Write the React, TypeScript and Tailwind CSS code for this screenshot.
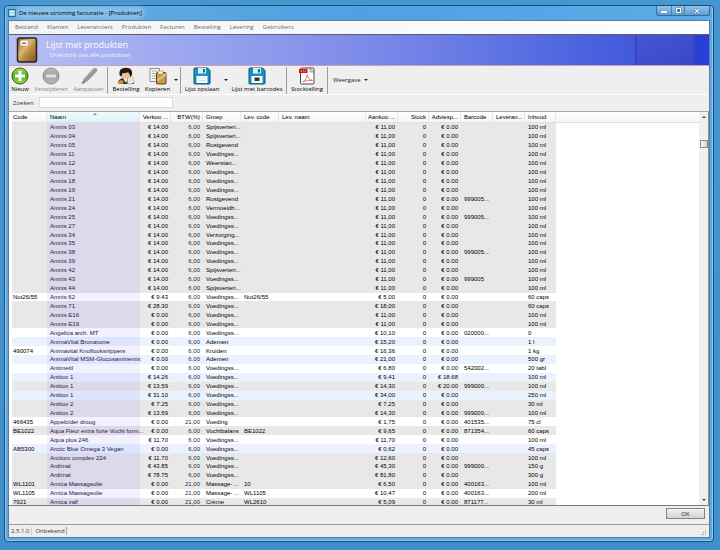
import type { ReactNode } from 'react'

type Tone = 'g' | 'w' | 'b'
type Product = [Tone, string, string, string, string, string, string, string, string, string, string]

const amnis = (n: string, groep: string, barcode = ''): Product => [
  'g', '', 'Amnis ' + n, '€ 14.00', '6,00', groep, '', '€ 11,00', '€ 0.00', barcode, '100 ml',
]

const PRODUCTS: Product[] = [
  amnis('03', 'Spijsverteri...'),
  amnis('04', 'Spijsverteri...'),
  amnis('05', 'Rustgevend'),
  amnis('11', 'Voedingss...'),
  amnis('12', 'Weerstan...'),
  amnis('13', 'Voedingss...'),
  amnis('18', 'Voedingss...'),
  amnis('19', 'Voedingss...'),
  amnis('21', 'Rustgevend', '999005...'),
  amnis('24', 'Vermoeidh...'),
  amnis('25', 'Voedingss...', '999005...'),
  amnis('27', 'Voedingss...'),
  amnis('34', 'Verzorging...'),
  amnis('35', 'Voedingss...'),
  amnis('38', 'Voedingss...', '999005...'),
  amnis('39', 'Voedingss...'),
  amnis('42', 'Spijsverteri...'),
  amnis('43', 'Voedingss...', '999005'),
  amnis('44', 'Spijsverteri...'),
  ['w', 'Nut26/55', 'Amnis 62', '€ 9.43', '6,00', 'Voedingss...', 'Nut26/55', '€ 5,00', '€ 0.00', '', '60 caps'],
  ['g', '', 'Amnis 71', '€ 28.30', '6,00', 'Voedingss...', '', '€ 18,00', '€ 0.00', '', '60 caps'],
  ['g', '', 'Amnis E16', '€ 0.00', '6,00', 'Voedingss...', '', '€ 11,00', '€ 0.00', '', '100 ml'],
  ['g', '', 'Amnis E19', '€ 0.00', '6,00', 'Voedingss...', '', '€ 11,00', '€ 0.00', '', '100 ml'],
  ['w', '', 'Angelica arch. MT', '€ 0.00', '6,00', 'Voedingss...', '', '€ 10,10', '€ 0.00', '020000...', '0'],
  ['b', '', 'AnimaVital Bronarome', '€ 0.00', '6,00', 'Ademen', '', '€ 15,20', '€ 0.00', '', '1 l'],
  ['w', '490074', 'Animavital Knoflooksnippers', '€ 0.00', '6,00', 'Kruiden', '', '€ 16,36', '€ 0.00', '', '1 kg'],
  ['b', '', 'AnimaVital MSM-Glucosaminemix', '€ 0.00', '6,00', 'Ademen', '', '€ 21,00', '€ 0.00', '', '500 gr'],
  ['w', '', 'Antimetil', '€ 0.00', '6,00', 'Voedingss...', '', '€ 6,80', '€ 0.00', '542002...', '20 tabl'],
  ['b', '', 'Antitox 1', '€ 14.26', '6,00', 'Voedingss...', '', '€ 9,41', '€ 18.68', '', '100 ml'],
  ['g', '', 'Antitox 1', '€ 13.59', '6,00', 'Voedingss...', '', '€ 14,30', '€ 20.00', '999000...', '100 ml'],
  ['b', '', 'Antitox 1', '€ 31.10', '6,00', 'Voedingss...', '', '€ 34,00', '€ 0.00', '', '250 ml'],
  ['g', '', 'Antitox 2', '€ 7.25', '6,00', 'Voedingss...', '', '€ 7,25', '€ 0.00', '', '30 ml'],
  ['g', '', 'Antitox 2', '€ 13.59', '6,00', 'Voedingss...', '', '€ 14,30', '€ 0.00', '999000...', '100 ml'],
  ['w', '466435', 'Appelcider droog', '€ 0.00', '21,00', 'Voeding', '', '€ 1,75', '€ 0.00', '401535...', '75 cl'],
  ['g', 'BE1022', 'Aqua Fleur extra forte Vocht form...', '€ 0.00', '6,00', 'Vochtbalans', 'BE1022', '€ 9,65', '€ 0.00', '871354...', '60 caps'],
  ['w', '', 'Aqua plus 246', '€ 11.70', '6,00', 'Voedingss...', '', '€ 11,70', '€ 0.00', '', '100 ml'],
  ['b', 'AB5300', 'Arctic Blue Omega 3 Vegan', '€ 0.00', '6,00', 'Voedingss...', '', '€ 0,62', '€ 0.00', '', '45 caps'],
  ['g', '', 'Arctium complex 224', '€ 11.70', '6,00', 'Voedingss...', '', '€ 12,60', '€ 0.00', '', '100 ml'],
  ['g', '', 'Ardrinal', '€ 43.85', '6,00', 'Voedingss...', '', '€ 45,30', '€ 0.00', '999000...', '150 g'],
  ['g', '', 'Ardrinal', '€ 78.75', '6,00', 'Voedingss...', '', '€ 81,80', '€ 0.00', '', '300 g'],
  ['g', 'WL1101', 'Arnica Massageolie', '€ 0.00', '21,00', 'Massage- ...', '10', '€ 6,50', '€ 0.00', '400163...', '100 ml'],
  ['w', 'WL1105', 'Arnica Massageolie', '€ 0.00', '21,00', 'Massage- ...', 'WL1105', '€ 10,47', '€ 0.00', '400163...', '200 ml'],
  ['g', '7921', 'Arnica zalf', '€ 0.00', '21,00', 'Crème', 'WL2610', '€ 5,09', '€ 0.00', '871177...', '30 ml'],
]

const ROW_TONE: Record<Tone, string> = { g: 'bg-[#e8e8e8]', w: 'bg-white', b: 'bg-[#ebf2fe]' }
const NAME_TONE: Record<Tone, string> = { g: 'bg-[#dcdaea]', w: 'bg-[#f3f1fe]', b: 'bg-[#dfe4fd]' }

const COLUMNS = [
  { label: 'Code', width: 'w-[35px]', right: false },
  { label: 'Naam', width: 'w-[93px]', right: false },
  { label: 'Verkoo ...', width: 'w-[31px]', right: true },
  { label: 'BTW(%)', width: 'w-[32px]', right: true },
  { label: 'Groep', width: 'w-[38px]', right: false },
  { label: 'Lev. code', width: 'w-[38px]', right: false },
  { label: 'Lev. naam', width: 'w-[87px]', right: false },
  { label: 'Aankoo ...', width: 'w-[32px]', right: true },
  { label: 'Stock', width: 'w-[31px]', right: true },
  { label: 'Adviesp...', width: 'w-[32px]', right: true },
  { label: 'Barcode', width: 'w-[32px]', right: false },
  { label: 'Leveran...', width: 'w-[32px]', right: false },
  { label: 'Inhoud', width: 'w-[31px]', right: false },
]

const MENU = ['Bestand', 'Klanten', 'Leveranciers', 'Produkten', 'Facturen', 'Bestelling', 'Levering', 'Gebruikers']

function Row({ p }: { p: Product }) {
  const [tone, code, naam, verkoop, btw, groep, levCode, aankoop, advies, barcode, inhoud] = p
  const right = 'pr-[3px] text-right'
  const left = 'pl-[3px]'
  return (
    <tr className={ROW_TONE[tone]}>
      <td className="pl-px">{code}</td>
      <td className={`${left} ${NAME_TONE[tone]} text-[#1c1747]`}>{naam}</td>
      <td className={right}>{verkoop}</td>
      <td className={`${right} text-[#17294d]`}>{btw}</td>
      <td className={left}>{groep}</td>
      <td className={left}>{levCode}</td>
      <td />
      <td className={right}>{aankoop}</td>
      <td className={right}>0</td>
      <td className={right}>{advies}</td>
      <td className={left}>{barcode}</td>
      <td />
      <td className={left}>{inhoud}</td>
      <td className="bg-white" />
    </tr>
  )
}

function Tool({ label, width, disabled, children }: { label: string; width: string; disabled?: boolean; children: ReactNode }) {
  return (
    <button
      type="button"
      disabled={disabled}
      className={`${width} flex shrink-0 flex-col items-center whitespace-nowrap text-black disabled:text-[#8a8a8a]`}
    >
      {children}
      <span className="leading-[8px]">{label}</span>
    </button>
  )
}

const Separator = () => <span className="mx-px h-[27px] w-px shrink-0 bg-[#9b9b9b]" />

function DropButton({ label }: { label: string }) {
  return (
    <button type="button" aria-label={label} className="flex h-[26px] w-[7px] shrink-0 items-center justify-center">
      <svg className="h-[2px] w-[4px]" viewBox="0 0 4 2" aria-hidden="true">
        <path d="M0 0h4L2 2z" fill="#222" />
      </svg>
    </button>
  )
}

function RoundIcon({ plus }: { plus?: boolean }) {
  const id = plus ? 'plusFill' : 'minusFill'
  return (
    <svg className="size-[18px]" viewBox="0 0 18 18" aria-hidden="true">
      <defs>
        <linearGradient id={id} x1="0" y1="0" x2="0" y2="1">
          <stop offset="0" stopColor={plus ? '#b5e06a' : '#bdbdbd'} />
          <stop offset=".5" stopColor={plus ? '#4fae1d' : '#a2a2a2'} />
          <stop offset="1" stopColor={plus ? '#a4dc42' : '#b9b9b9'} />
        </linearGradient>
      </defs>
      <circle cx="9" cy="9" r="8" fill={`url(#${id})`} stroke={plus ? '#2c6a18' : '#8f8f8f'} />
      <path d={plus ? 'M7.500 4h3v3.500H14v3h-3.500V14h-3v-3.500H4v-3h3.500z' : 'M4 7.500h10v3H4z'} fill={plus ? '#fff' : '#dedede'} />
    </svg>
  )
}

function PenIcon() {
  return (
    <svg className="size-[18px]" viewBox="0 0 18 18" aria-hidden="true">
      <path d="M1.500 17 4 11.500 13 1.800Q15 .5 16.500 1.500T16.800 4.500L8 13.800 3.500 16.300z" fill="#979797" />
      <path d="M5 11.500 14 2.500" stroke="#b5b5b5" fill="none" />
      <path d="m1.500 17 2-3 1.500 1.500z" fill="#666" />
    </svg>
  )
}

function PersonIcon() {
  return (
    <svg className="size-[18px]" viewBox="0 0 18 18" aria-hidden="true">
      <path d="M1 17q0-5 5-6h5q5 1 6 6z" fill="#2b2b2b" />
      <path d="M6 11h5l-2 5z" fill="#f6f6f6" />
      <circle cx="9" cy="7.500" r="4.300" fill="#f1bd8e" />
      <path d="M2.500 8Q1.500 .8 9 .8q7 0 6 7.200l-1.700 2Q13 6.500 11 5.200 7 6.500 5.500 6L4.300 10z" fill="#1d1a19" />
      <path d="M1 15q3-3 5-1.500l1 2L5 17H1z" fill="#cf8f2b" />
      <path d="m10.500 11 5-1.500 2 5.500-4 2.500-3-1z" fill="#ede6d8" stroke="#a59a86" strokeWidth=".5" />
    </svg>
  )
}

function CopyIcon() {
  return (
    <svg className="size-[18px]" viewBox="0 0 18 18" aria-hidden="true">
      <path d="M1 1.500h9.500v13H1z" fill="#f7f7f7" stroke="#8d8d8d" />
      <path d="M3 4h5M3 6.500h4M3 9h4M3 11.500h4" stroke="#aaa" />
      <rect x="7.500" y="5.500" width="9.500" height="11.500" rx="1" fill="#c49a51" stroke="#604418" />
      <path d="M8 12 17 6v3l-9 6z" fill="#e3c486" opacity=".8" />
      <path d="M9 4h5v3H9z" fill="#fff" stroke="#8b7a55" strokeWidth=".6" />
    </svg>
  )
}

function DiskIcon({ barcode }: { barcode?: boolean }) {
  return (
    <svg className="size-[18px]" viewBox="0 0 18 18" aria-hidden="true">
      <path d="M1 2q0-1 1-1h12.500L17 3.500V16q0 1-1 1H2q-1 0-1-1z" fill="#1593c4" stroke="#0b536f" />
      <path d="M5 1h8v5.500H5z" fill="#dfeef4" />
      <path d="M10 2h2v3.500h-2z" fill="#176a8b" />
      <path d="M3.500 9h11v7h-11z" fill="#fff" />
      {barcode ? (
        <path d="M6.500 10.500h5V14h-5z" fill="#333" />
      ) : (
        <path d="M5 11h8M5 13.500h8" stroke="#cfe2ea" />
      )}
    </svg>
  )
}

function PdfIcon() {
  return (
    <svg className="size-[18px]" viewBox="0 0 18 18" aria-hidden="true">
      <rect x="2.500" y="1" width="13.500" height="16" rx="1" fill="#fff" stroke="#4a4a4a" />
      <path d="M12 1l4 4h-4z" fill="#ddd" stroke="#777" strokeWidth=".6" />
      <path d="M1 2h8.500v4H1z" fill="#c8181c" />
      <path d="M2.500 4h5.500" stroke="#f6b5b5" strokeDasharray="1.500 .7" />
      <path d="M5 15q4-3 4.300-7.500M9.300 8q.5 4 5.200 5.500M5 15q4-2.500 9.500-1.500" stroke="#dc6a6a" fill="none" strokeWidth=".9" />
    </svg>
  )
}

function BookIcon() {
  return (
    <svg className="h-[26px] w-[22px]" viewBox="0 0 22 26" aria-hidden="true">
      <defs>
        <linearGradient id="book" x1="0" y1="0" x2="1" y2="1">
          <stop offset="0" stopColor="#8a6429" />
          <stop offset=".4" stopColor="#d8b878" />
          <stop offset=".6" stopColor="#b78a40" />
          <stop offset="1" stopColor="#7d571d" />
        </linearGradient>
      </defs>
      <rect x="1.500" y="1" width="19" height="24" rx="2" fill="url(#book)" stroke="#2b2118" strokeWidth="1.500" />
      <path d="M4.500 3.500h7v5h-7z" fill="#fff" />
      <path d="M6 5.500h4v1.500H6z" fill="#777" />
    </svg>
  )
}

export default function App() {
  return (
    <div className="flex h-screen flex-col bg-linear-to-b from-[#4696d2] to-[#3f8fca] pt-[5px] pr-[6px] pb-[8px] pl-[4px] font-['Open_Sans',sans-serif] text-[6px] leading-[8px] text-black">
      <div className="flex min-h-0 flex-1 flex-col rounded-[4px] border border-[#1f4f79] bg-[#5aaae8] px-[3px] pb-[3px] shadow-[inset_0_0_0_1px_#8fc8f2]">
        <header className="flex h-[14px] shrink-0 items-start justify-between bg-linear-to-r from-[#63ace3] via-[#4fa1e2] to-[#5cabe8]">
          <div className="flex h-full items-center gap-[3px]">
            <svg className="size-[8px]" viewBox="0 0 8 8" aria-hidden="true">
              <rect x=".5" y=".5" width="7" height="7" fill="#8fd0dd" stroke="#2c6d86" />
              <path d="M2 2.500h4M2 4h3M2 5.500h4" stroke="#fff" strokeWidth=".7" />
            </svg>
            <h1 className="rounded-full bg-white/25 text-[6px] font-medium whitespace-nowrap shadow-[0_0_4px_3px_rgba(255,255,255,0.25)]">
              De nieuwe stroming facturatie - [Produkten]
            </h1>
          </div>
          <div className="flex h-[10px] overflow-hidden rounded-b-[3px] border border-t-0 border-[#326b9c] bg-linear-to-b from-[#93c1e6] to-[#5b9fd6]">
            <button type="button" aria-label="Minimaliseren" className="flex w-[15px] items-center justify-center border-r border-[#4681b0]">
              <span className="mt-[3px] h-[2px] w-[6px] bg-white shadow-[0_0_1px_#333]" />
            </button>
            <button type="button" aria-label="Maximaliseren" className="flex w-[13px] items-center justify-center border-r border-[#4681b0]">
              <span className="size-[5px] border border-white bg-[#56718a] shadow-[0_0_1px_#333]" />
            </button>
            <button type="button" aria-label="Sluiten" className="flex w-[24px] items-center justify-center">
              <svg className="size-[6px]" viewBox="0 0 6 6" aria-hidden="true">
                <path d="m1 1 4 4M5 1 1 5" stroke="#3b4f62" strokeWidth="2.200" />
                <path d="m1 1 4 4M5 1 1 5" stroke="#fff" strokeWidth="1.200" />
              </svg>
            </button>
          </div>
        </header>

        <div className="flex min-h-0 flex-1 flex-col border border-[#5d7f9e] bg-[#efefef]">
          <nav className="flex h-[13px] shrink-0 items-center gap-[9px] bg-linear-to-r from-[#f4f4f4] to-[#fdfdfd] pb-px pl-[6px] text-[#6a6a6a]">
            {MENU.map((m) => (
              <button key={m} type="button">{m}</button>
            ))}
          </nav>

          <section className="flex h-[32px] shrink-0 border-t border-b border-t-[#5b5b7a] border-b-[#cf9fb4] bg-linear-to-r from-[#b9c0f4] via-[#7e8ce9] to-[#3348d8] pl-[7px]">
            <div className="flex flex-1 items-center gap-[8px] text-white">
              <BookIcon />
              <div className="flex h-full flex-col pt-[4px]">
                <h2 className="text-[9px] leading-[12px]">Lijst met produkten</h2>
                <p className="pl-[4px] leading-[9px] text-white/80">Overzicht van alle produkten</p>
              </div>
            </div>
            <div className="w-[60px] border-x-2 border-[#3646c2] bg-linear-to-br from-[#4555d4] to-[#3a48c8]" />
            <div className="w-[14px] bg-[#2a3fd8]" />
          </section>

          <div role="toolbar" className="flex h-[29px] shrink-0 items-start border-b border-white pt-px">
            <Tool label="Nieuw" width="w-[22px]"><RoundIcon plus /></Tool>
            <Tool label="Verwijderen" width="w-[40px]" disabled><RoundIcon /></Tool>
            <Tool label="Aanpassen" width="w-[35px]" disabled><PenIcon /></Tool>
            <Separator />
            <Tool label="Bestelling" width="w-[34px]"><PersonIcon /></Tool>
            <Tool label="Kopieren" width="w-[29px]"><CopyIcon /></Tool>
            <DropButton label="Kopieren opties" />
            <Separator />
            <Tool label="Lijst opslaan" width="w-[40px]"><DiskIcon /></Tool>
            <DropButton label="Lijst opslaan opties" />
            <Tool label="Lijst met barcodes" width="w-[56px]"><DiskIcon barcode /></Tool>
            <Separator />
            <Tool label="Stocktelling" width="w-[38px]"><PdfIcon /></Tool>
            <Separator />
            <button type="button" className="flex h-[26px] items-center gap-[3px] pl-[4px] text-[#222]">
              Weergave
              <svg className="h-[2px] w-[4px]" viewBox="0 0 4 2" aria-hidden="true"><path d="M0 0h4L2 2z" fill="#222" /></svg>
            </button>
          </div>

          <div className="flex h-[16px] shrink-0 items-center gap-[5px] pb-px pl-[4px] text-[#333]">
            <label htmlFor="zoeken">Zoeken</label>
            <input id="zoeken" type="text" className="h-[11px] w-[134px] border border-[#dcdcdc] bg-white px-[2px]" />
          </div>

          <div className="flex min-h-0 flex-1 border-t border-r border-b border-t-[#a5a9ae] border-r-[#8b9097] border-b-[#777c84] bg-white font-['Liberation_Sans',sans-serif] leading-[6px]">
            <div id="produkten" className="min-w-0 flex-1 overflow-hidden pl-[3px]">
              <table className="h-[395px] w-full table-fixed border-separate border-spacing-0 whitespace-nowrap">
                <thead className="h-[11px]">
                  <tr className="h-[11px] bg-linear-to-b from-white to-[#f3f4f6]">
                    {COLUMNS.map((c) => (
                      <th
                        key={c.label}
                        scope="col"
                        aria-sort={c.label === 'Naam' ? 'ascending' : undefined}
                        className={`${c.width} relative h-[11px] border-r border-b border-r-[#e4e8ee] border-b-[#dde1e6] p-0 font-normal ${
                          c.right ? 'pr-[2px] text-right' : c.label === 'Code' ? 'pl-px text-left' : 'pl-[3px] text-left'
                        } ${c.label === 'Naam' ? 'border-r-[#8fcbe2] bg-linear-to-b from-[#f2fafd] to-[#dcf1f9]' : ''}`}
                      >
                        {c.label}
                        {c.label === 'Naam' && (
                          <svg className="absolute top-px left-1/2 h-[2px] w-[4px]" viewBox="0 0 4 2" aria-hidden="true">
                            <path d="M0 2h4L2 0z" fill="#5f8ea5" />
                          </svg>
                        )}
                      </th>
                    ))}
                    <td className="border-b border-[#dde1e6]" />
                  </tr>
                </thead>
                <tbody>
                  {PRODUCTS.map((p, i) => (
                    <Row key={i} p={p} />
                  ))}
                </tbody>
              </table>
            </div>
            <div className="flex w-[9px] shrink-0 flex-col items-center bg-[#f0f0f0]" role="scrollbar" aria-label="Produkten" aria-controls="produkten" aria-valuenow={7}>
              <svg className="mt-[4px] h-[2px] w-[4px]" viewBox="0 0 4 2" aria-hidden="true"><path d="M0 2h4L2 0z" fill="#444" /></svg>
              <div className="mt-[22px] h-[8px] w-[8px] border border-[#8f8f8f] bg-linear-to-r from-[#f6f6f6] to-[#cfcfcf]" />
              <svg className="mt-auto mb-[4px] h-[2px] w-[4px]" viewBox="0 0 4 2" aria-hidden="true"><path d="M0 0h4L2 2z" fill="#444" /></svg>
            </div>
          </div>

          <div className="flex h-[19px] shrink-0 items-start justify-end border-b border-[#9a9a9a] pt-[2px] pr-[4px]">
            <button type="button" className="h-[11px] w-[39px] border border-[#858585] bg-linear-to-b from-[#f3f3f3] to-[#d2d2d2] text-[#222]">OK</button>
          </div>

          <footer className="flex h-[12px] shrink-0 items-center bg-[#f1eded] pl-[2px] text-[#333]">
            <span className="border-r border-[#d0cccc] pr-[2px]">2.5.1.0</span>
            <span className="border-r border-[#9fa8b0] pr-px pl-[3px]">Onbekend</span>
            <svg className="mt-[3px] mr-[2px] ml-auto size-[6px]" viewBox="0 0 6 6" aria-hidden="true">
              <path d="M4 0h1v1H4zM4 2h1v1H4zM4 4h1v1H4zM2 2h1v1H2zM2 4h1v1H2zM0 4h1v1H0z" fill="#999" />
            </svg>
          </footer>
        </div>
      </div>
    </div>
  )
}
